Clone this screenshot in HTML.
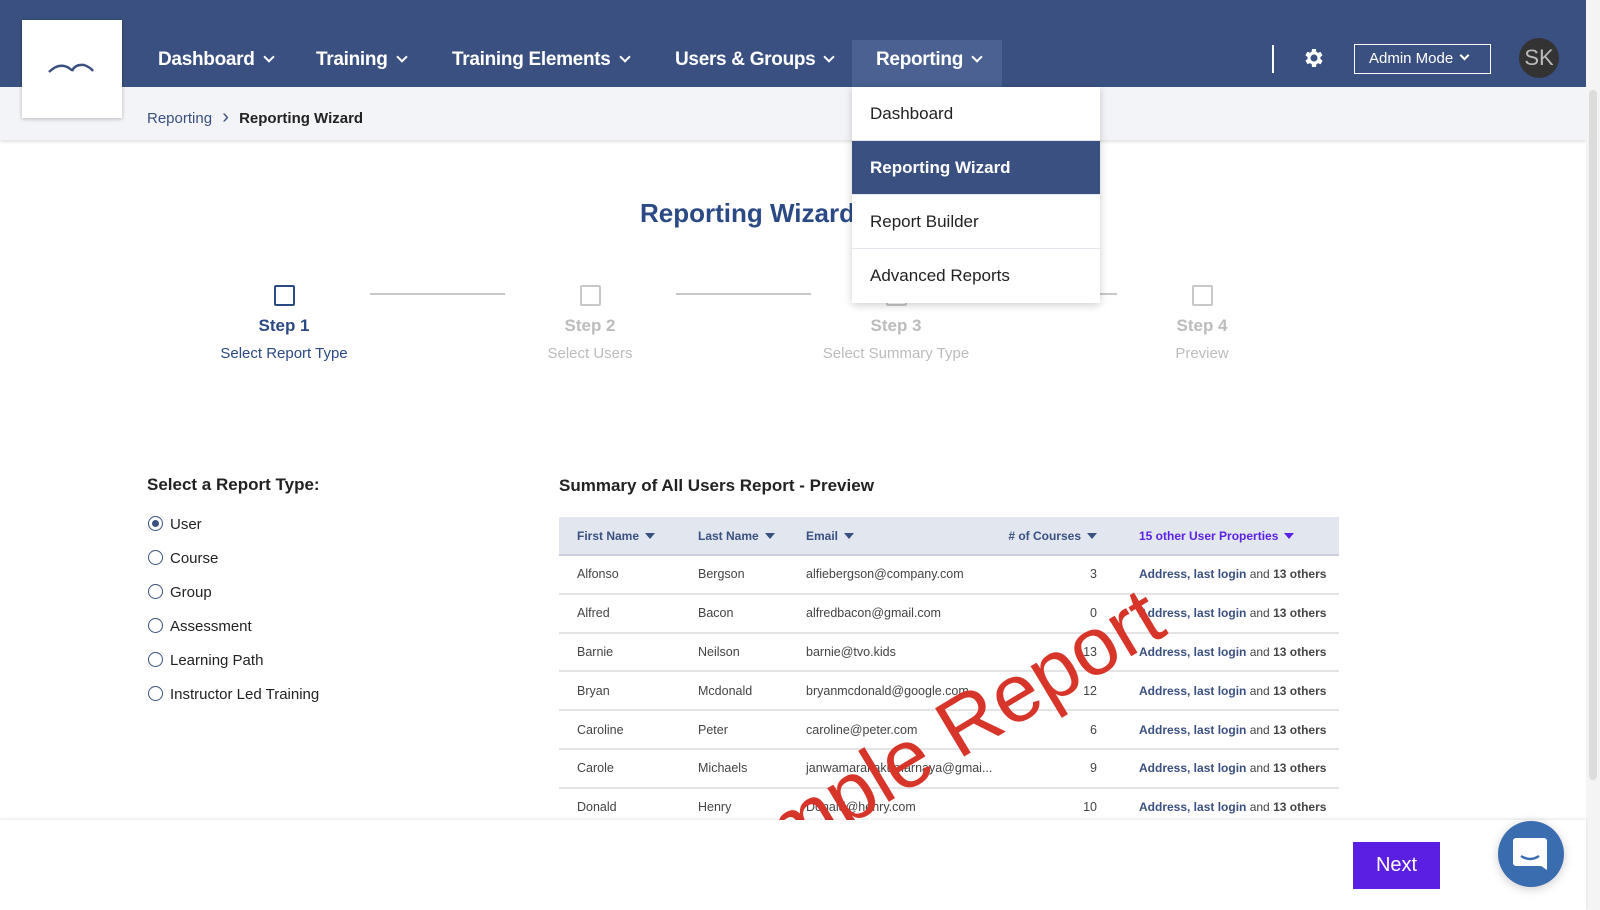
<!DOCTYPE html>
<html><head><meta charset="utf-8"><style>
*{margin:0;padding:0;box-sizing:border-box}
body{width:1600px;height:910px;overflow:hidden;background:#fff;font-family:"Liberation Sans",Arial,sans-serif;position:relative;color:#222}
.abs{position:absolute}
.hdr{left:0;top:0;width:1586px;height:87px;background:#3a5080}
.nav{color:#fff;font-weight:bold;font-size:19px;top:49px;letter-spacing:-0.3px}
.chev{display:inline-block;width:8px;height:8px;border-right:2px solid #fff;border-bottom:2px solid #fff;transform:rotate(45deg);margin-left:10px;position:relative;top:-4px}
.crumb{left:0;top:87px;width:1586px;height:53px;background:#f3f4f8;box-shadow:0 2px 3px rgba(0,0,0,.12)}
.dd{left:852px;top:87px;width:248px;height:216px;background:#fff;box-shadow:0 2px 8px rgba(0,0,0,.2)}
.dd div{height:54px;line-height:54px;padding-left:18px;font-size:17px;color:#222;border-bottom:1px solid #e3e6ec}
.step{width:200px;text-align:center}
.box{width:21px;height:21px;border:2px solid #c8c8c8;border-radius:2px;margin:0 auto}
.sl{font-weight:bold;font-size:17px;color:#bcbcbc;margin-top:10px}
.ss{font-size:15px;color:#bcbcbc;margin-top:9px}
.line{height:2px;background:#c8c8c8;top:293px;width:135px}
.radio{left:148px;font-size:15px;color:#222}
.radio i{display:inline-block;width:15px;height:15px;border:1.5px solid #3a5080;border-radius:50%;vertical-align:-2px;margin-right:7px;position:relative}
table{border-collapse:collapse;font-size:12.5px;color:#444;table-layout:fixed}
th{background:#e2e6ee;height:38px;text-align:left;color:#3a5080;font-size:12px;font-weight:bold;border-bottom:2px solid #ccd;}
td{height:38.8px;border-bottom:2px solid #e4e4e4;white-space:nowrap}
.tri{display:inline-block;border-left:5px solid transparent;border-right:5px solid transparent;border-top:6px solid #3a5080;margin-left:6px;vertical-align:1px}
.lk{color:#3a5080;font-weight:bold}
.n{text-align:right;padding-right:16px}
.p{padding-left:26px}
td.p{font-size:12px}
</style></head><body>
<div class="abs hdr"></div>
<div class="abs" style="left:22px;top:20px;width:100px;height:98px;background:#fff;box-shadow:0 1px 4px rgba(0,0,0,.25);z-index:3">
<svg width="100" height="98"><path d="M27 52 Q37 42 47 48 Q50 50 50 51 Q53 44 62 45 Q68 47 71 51" fill="none" stroke="#3a5080" stroke-width="2.5"/></svg></div>
<div class="abs nav" style="left:158px">Dashboard<span class="chev"></span></div>
<div class="abs nav" style="left:316px">Training<span class="chev"></span></div>
<div class="abs nav" style="left:452px">Training Elements<span class="chev"></span></div>
<div class="abs nav" style="left:675px">Users &amp; Groups<span class="chev"></span></div>
<div class="abs" style="left:852px;top:40px;width:150px;height:47px;background:#4a6191"></div>
<div class="abs nav" style="left:876px">Reporting<span class="chev"></span></div>
<div class="abs" style="left:1272px;top:45px;width:2px;height:28px;background:#fff"></div>
<svg class="abs" style="left:1301px;top:46px" width="24" height="24" viewBox="0 0 24 24"><path fill="#fff" d="M19.4 13a7.5 7.5 0 000-2l2.1-1.6-2-3.5-2.5 1a7 7 0 00-1.7-1L15 3h-4l-.4 2.7a7 7 0 00-1.7 1l-2.5-1-2 3.5L6.6 11a7.5 7.5 0 000 2l-2.1 1.6 2 3.5 2.5-1a7 7 0 001.7 1L11 21h4l.4-2.7a7 7 0 001.7-1l2.5 1 2-3.5zM13 15.5A3.5 3.5 0 1113 8.5a3.5 3.5 0 010 7z"/></svg>
<div class="abs" style="left:1354px;top:44px;width:137px;height:30px;border:1.5px solid #fff;color:#fff;font-size:15px;line-height:27px;padding-left:14px">Admin Mode<span class="chev" style="width:7px;height:7px;margin-left:8px"></span></div>
<div class="abs" style="left:1519px;top:38px;width:40px;height:40px;border-radius:50%;background:#333;color:#bbb;font-size:22px;line-height:40px;text-align:center">SK</div>
<div class="abs crumb"></div>
<div class="abs" style="left:147px;top:110px;font-size:15px;color:#3a5080">Reporting <span style="color:#3a5080;margin:0 6px;font-size:20px;line-height:15px">&#x203A;</span> <b style="color:#222">Reporting Wizard</b></div>
<div class="abs" style="left:1586px;top:0;width:14px;height:910px;background:#f4f4f4"></div>
<div class="abs" style="left:1589px;top:90px;width:8px;height:690px;background:#dcdcdc;border-radius:4px"></div>
<div class="abs" style="left:640px;top:198px;font-size:26px;font-weight:bold;color:#2b4a85">Reporting Wizard</div>
<div class="abs line" style="left:370px"></div><div class="abs line" style="left:676px"></div><div class="abs line" style="left:982px"></div>
<div class="abs step" style="left:184px;top:285px"><div class="box" style="border-color:#2b4a85"></div><div class="sl" style="color:#2b4a85">Step 1</div><div class="ss" style="color:#2b4a85">Select Report Type</div></div>
<div class="abs step" style="left:490px;top:285px"><div class="box"></div><div class="sl">Step 2</div><div class="ss">Select Users</div></div>
<div class="abs step" style="left:796px;top:285px"><div class="box"></div><div class="sl">Step 3</div><div class="ss">Select Summary Type</div></div>
<div class="abs step" style="left:1102px;top:285px"><div class="box"></div><div class="sl">Step 4</div><div class="ss">Preview</div></div>
<div class="abs dd"><div>Dashboard</div><div style="background:#3a5080;color:#fff;font-weight:bold">Reporting Wizard</div><div>Report Builder</div><div style="border:0">Advanced Reports</div></div>
<div class="abs" style="left:147px;top:475px;font-size:17px;font-weight:bold">Select a Report Type:</div>
<div class="abs radio" style="top:516px"><i><span style="position:absolute;left:2.5px;top:2.5px;width:7px;height:7px;border-radius:50%;background:#3a5080"></span></i>User</div>
<div class="abs radio" style="top:550px"><i></i>Course</div>
<div class="abs radio" style="top:584px"><i></i>Group</div>
<div class="abs radio" style="top:618px"><i></i>Assessment</div>
<div class="abs radio" style="top:652px"><i></i>Learning Path</div>
<div class="abs radio" style="top:686px"><i></i>Instructor Led Training</div>
<div class="abs" style="left:559px;top:476px;font-size:17px;font-weight:bold">Summary of All Users Report - Preview</div>
<div class="abs" style="left:559px;top:517px;width:780px;height:304px;overflow:hidden">
<table style="width:780px">
<colgroup><col style="width:139px"><col style="width:108px"><col style="width:190px"><col style="width:117px"><col></colgroup>
<tr><th style="padding-left:18px">First Name<span class="tri"></span></th><th>Last Name<span class="tri"></span></th><th>Email<span class="tri"></span></th><th class="n">#&nbsp;of Courses<span class="tri"></span></th><th class="p" style="color:#5b21e6">15 other User Properties<span class="tri" style="border-top-color:#5b21e6"></span></th></tr>
<tr><td style="padding-left:18px">Alfonso</td><td>Bergson</td><td>alfiebergson@company.com</td><td class="n">3</td><td class="p"><span class="lk">Address, last login</span> and <b>13 others</b></td></tr>
<tr><td style="padding-left:18px">Alfred</td><td>Bacon</td><td>alfredbacon@gmail.com</td><td class="n">0</td><td class="p"><span class="lk">Address, last login</span> and <b>13 others</b></td></tr>
<tr><td style="padding-left:18px">Barnie</td><td>Neilson</td><td>barnie@tvo.kids</td><td class="n">13</td><td class="p"><span class="lk">Address, last login</span> and <b>13 others</b></td></tr>
<tr><td style="padding-left:18px">Bryan</td><td>Mcdonald</td><td>bryanmcdonald@google.com</td><td class="n">12</td><td class="p"><span class="lk">Address, last login</span> and <b>13 others</b></td></tr>
<tr><td style="padding-left:18px">Caroline</td><td>Peter</td><td>caroline@peter.com</td><td class="n">6</td><td class="p"><span class="lk">Address, last login</span> and <b>13 others</b></td></tr>
<tr><td style="padding-left:18px">Carole</td><td>Michaels</td><td>janwamarakakumarnaya@gmai...</td><td class="n">9</td><td class="p"><span class="lk">Address, last login</span> and <b>13 others</b></td></tr>
<tr><td style="padding-left:18px">Donald</td><td>Henry</td><td>Donald@henry.com</td><td class="n">10</td><td class="p"><span class="lk">Address, last login</span> and <b>13 others</b></td></tr>
</table>
<div class="abs" style="left:72px;top:188px;font-size:82px;color:#d8352a;transform:rotate(-31deg);transform-origin:center;white-space:nowrap;width:580px;text-align:center;line-height:92px">Sample Report</div>
</div>
<div class="abs" style="left:0;top:820px;width:1586px;height:90px;background:#fff;box-shadow:0 -1px 3px rgba(0,0,0,.1)"></div>
<div class="abs" style="left:1353px;top:842px;width:87px;height:47px;background:#5b1fe4;color:#fff;font-size:20px;line-height:47px;text-align:center">Next</div>
<div class="abs" style="left:1498px;top:821px;width:66px;height:66px;border-radius:50%;background:#3a6cb0;box-shadow:0 2px 10px rgba(0,0,0,.2)">
<svg width="66" height="66"><path d="M18 17 h28 a3 3 0 0 1 3 3 v29 l-6 -4 h-25 a3 3 0 0 1 -3 -3 v-22 a3 3 0 0 1 3 -3z" fill="#fff"/><path d="M23 35 q9 6 18 0" stroke="#3a6cb0" stroke-width="2.5" fill="none"/></svg></div>
</body></html>
